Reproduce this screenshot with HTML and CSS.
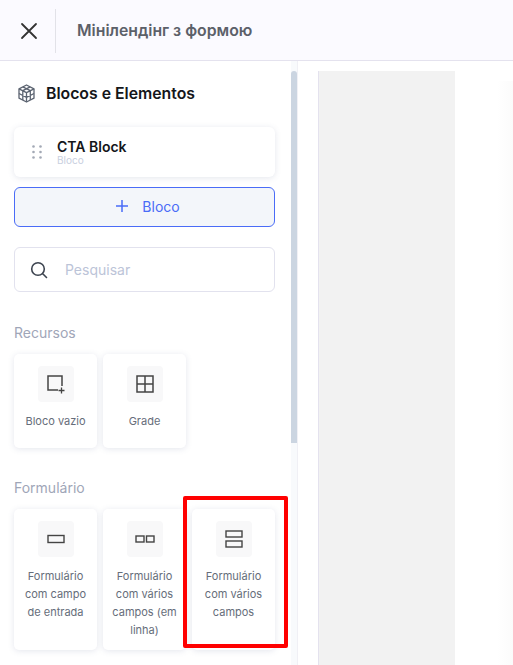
FILE: index.html
```html
<!DOCTYPE html>
<html lang="pt">
<head>
    <meta charset="UTF-8">
    <meta name="viewport" content="width=device-width, initial-scale=1.0">
    <title>Мінілендінг з формою</title>
    <link rel="stylesheet" href="styles.css">
</head>

<body>
    <header class="topbar">
        <div class="close-box">
            <svg width="18" height="18" viewBox="0 0 18 18" fill="none" stroke="#333" stroke-width="1.8" stroke-linecap="round"><path d="M2 2l14 14M16 2L2 16"/></svg>
        </div>
        <h1 class="page-title">Мінілендінг з формою</h1>
    </header>

    <div class="main">
        <aside class="sidebar">
            <div class="panel">
                <div class="panel-head">
                    <svg width="19" height="19" viewBox="0 0 19 19" fill="none" stroke="#5b6370" stroke-width="1.3" stroke-linejoin="round"><path d="M9.5 1l7.500 3.800v9.400L9.500 18 2 14.200V4.800z"/><path d="M2 4.800l7.500 3.800L17 4.800M9.500 8.600V18M5.800 2.900l7.500 3.800v9.400M13.200 2.900L5.800 6.700v9.400M2 9.500l7.500 3.800L17 9.500"/></svg>
                    <h2>Blocos e Elementos</h2>
                </div>

                <div class="block-row">
                    <svg class="drag" width="10" height="14" viewBox="0 0 10 14" fill="#a3a9b5"><circle cx="1.500" cy="1.500" r="1.300"/><circle cx="8.500" cy="1.500" r="1.300"/><circle cx="1.500" cy="7" r="1.300"/><circle cx="8.500" cy="7" r="1.300"/><circle cx="1.500" cy="12.500" r="1.300"/><circle cx="8.500" cy="12.500" r="1.300"/></svg>
                    <div class="block-text">
                        <div class="block-name">CTA Block</div>
                        <div class="block-type">Bloco</div>
                    </div>
                </div>

                <button class="add-btn" type="button">
                    <svg width="12" height="12" viewBox="0 0 12 12" stroke="#4a6cf7" stroke-width="1.500"><path d="M6 0v12M0 6h12"/></svg>
                    <span>Bloco</span>
                </button>

                <div class="search">
                    <svg width="18" height="18" viewBox="0 0 18 18" fill="none" stroke="#3d4450" stroke-width="1.600" stroke-linecap="round"><circle cx="8" cy="8" r="6.300"/><path d="M13 13l3.500 3.500"/></svg>
                    <span>Pesquisar</span>
                </div>

                <h3 class="section-title">Recursos</h3>
                <div class="cards">
                    <div class="card">
                        <div class="tile">
                            <svg width="20" height="20" viewBox="0 0 20 20" fill="none" stroke="#444" stroke-width="1.500"><path d="M16 12V2H2v14h10"/><path d="M15.500 13.500v6M12.500 16.500h6" stroke-width="1.300"/></svg>
                        </div>
                        <p>Bloco vazio</p>
                    </div>
                    <div class="card">
                        <div class="tile">
                            <svg width="18" height="18" viewBox="0 0 18 18" fill="none" stroke="#444" stroke-width="1.500"><rect x="1" y="1" width="16" height="16"/><path d="M9 1v16M1 9h16"/></svg>
                        </div>
                        <p>Grade</p>
                    </div>
                </div>

                <h3 class="section-title section-title-form">Formulário</h3>
                <div class="cards">
                    <div class="card card-tall">
                        <div class="tile">
                            <svg width="18" height="10" viewBox="0 0 18 10" fill="none" stroke="#444" stroke-width="1.400"><rect x="1" y="1.500" width="16" height="7"/></svg>
                        </div>
                        <p>Formulário com campo de entrada</p>
                    </div>
                    <div class="card card-tall">
                        <div class="tile">
                            <svg width="20" height="8" viewBox="0 0 20 8" fill="none" stroke="#444" stroke-width="1.400"><rect x="1" y="1" width="8" height="6"/><rect x="11.500" y="1" width="7.500" height="6"/></svg>
                        </div>
                        <p>Formulário com vários campos (em linha)</p>
                    </div>
                    <div class="card card-tall">
                        <div class="tile">
                            <svg width="18" height="18" viewBox="0 0 18 18" fill="none" stroke="#444" stroke-width="1.400"><rect x="1" y="1" width="16" height="6"/><rect x="1" y="11" width="16" height="6"/></svg>
                        </div>
                        <p>Formulário com vários campos</p>
                    </div>
                </div>
            </div>

            <div class="scroll-track">
                <div class="scroll-thumb"></div>
            </div>
        </aside>

        <section class="canvas">
            <div class="canvas-gray"></div>
            <div class="canvas-fade"></div>
        </section>
    </div>

    <div class="highlight"></div>
</body>
</html>
```

FILE: styles.css
```css
* {
    box-sizing: border-box;
}

body {
    font-family: Inter, "Liberation Sans", sans-serif;
    margin: 0;
    height: 665px;
    overflow: hidden;
    background: white;
    position: relative;
}

.topbar {
    height: 61px;
    background: #fbfaff;
    border-bottom: 1px solid #e4e2ee;
    display: flex;
    align-items: center;
}

.close-box {
    width: 56px;
    height: 44px;
    margin-top: 1px;
    border-right: 1px solid #e2e2e8;
    display: flex;
    align-items: center;
    justify-content: center;
    padding-left: 2px;
}

.page-title {
    margin: 0 0 0 21px;
    font-size: 15.8px;
    font-weight: 600;
    color: #5c6069;
}

.main {
    display: flex;
    height: 604px;
}

.sidebar {
    width: 298px;
    display: flex;
    border-right: 1px solid #f0f0f5;
}

.panel {
    width: 290px;
    padding: 0 15px 0 14px;
    flex-shrink: 0;
}

.panel-head {
    display: flex;
    align-items: center;
    height: 66px;
    padding-left: 3px;
    padding-bottom: 1px;
    gap: 10px;
}

.panel-head h2 {
    margin: 0;
    font-size: 15.8px;
    font-weight: 600;
    color: #14161a;
}

.block-row {
    height: 50px;
    background: white;
    border-radius: 6px;
    box-shadow: 0 1px 6px rgba(90, 100, 140, 0.16);
    display: flex;
    align-items: center;
    padding-left: 18px;
    gap: 15px;
}

.block-name {
    font-size: 14px;
    font-weight: 600;
    color: #14161a;
    line-height: 16px;
}

.block-type {
    font-size: 10px;
    color: #c8cfe0;
    line-height: 11px;
}

.add-btn {
    width: 100%;
    height: 40px;
    margin-top: 10px;
    padding: 0 0 2px 7px;
    background: #f3f6fa;
    border: 1px solid #4a6cf7;
    border-radius: 6px;
    display: flex;
    align-items: center;
    justify-content: center;
    gap: 14px;
    font-family: inherit;
    font-size: 14px;
    color: #4a6cf7;
}

.search {
    height: 45px;
    margin-top: 20px;
    border: 1px solid #e2e2ee;
    border-radius: 6px;
    display: flex;
    align-items: center;
    padding-left: 15px;
    gap: 17px;
    font-size: 14px;
    color: #bcc4d8;
}

.section-title {
    margin: 32px 0 0;
    font-size: 14px;
    font-weight: 400;
    line-height: 17px;
    color: #9fa6b8;
}

.section-title-form {
    margin-top: 31px;
}

.cards {
    display: flex;
    gap: 6px;
    margin-top: 13px;
}

.card {
    width: 83px;
    height: 94px;
    padding-top: 12px;
    background: white;
    border-radius: 5px;
    box-shadow: 0 1px 6px rgba(90, 100, 140, 0.16);
    display: flex;
    flex-direction: column;
    align-items: center;
    flex-shrink: 0;
}

.card-tall {
    height: 141px;
}

.card p {
    margin: 10px 0 0;
    padding: 0 5px;
    font-size: 11px;
    line-height: 18px;
    color: #666d7a;
    text-align: center;
}

.tile {
    width: 36px;
    height: 36px;
    background: #f8f8f9;
    border-radius: 4px;
    display: flex;
    align-items: center;
    justify-content: center;
    flex-shrink: 0;
}

.scroll-track {
    width: 7px;
    margin-left: 1px;
    background: #f8fafc;
    padding-top: 10px;
}

.scroll-thumb {
    height: 372px;
    background: #cbd5e1;
    border-radius: 3px 3px 0 0;
}

.canvas {
    flex: 1;
    display: flex;
    padding: 10px 0 0 20px;
}

.canvas-gray {
    width: 137px;
    background: #f2f2f2;
    border-left: 1px solid #e4e2ee;
}

.canvas-fade {
    width: 16px;
    height: 594px;
    margin: 10px 0 0 42px;
    background: linear-gradient(to right, white, #fbfbfb);
}

/* red annotation box from the screenshot */
.highlight {
    position: absolute;
    left: 183px;
    top: 496px;
    width: 105px;
    height: 152px;
    border: 4px solid #ff0000;
    border-radius: 2px;
}
```
